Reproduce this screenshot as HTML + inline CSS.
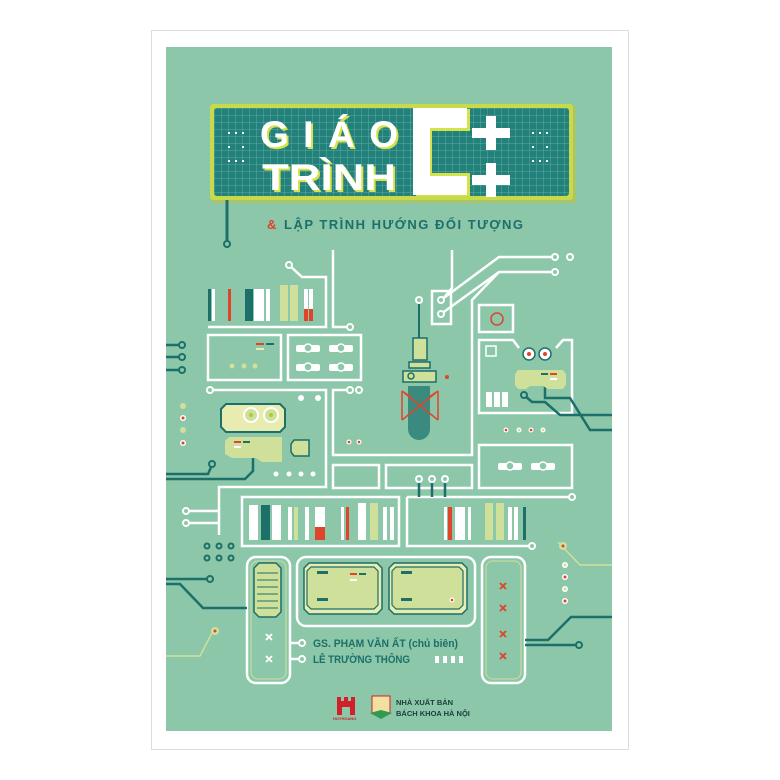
<!DOCTYPE html>
<html><head><meta charset="utf-8"><style>
html,body{margin:0;padding:0;background:#fff;width:780px;height:780px;overflow:hidden}
svg{display:block}
text{font-family:"Liberation Sans","DejaVu Sans",sans-serif;font-weight:bold}
</style></head><body>
<svg width="780" height="780" viewBox="0 0 780 780" xmlns="http://www.w3.org/2000/svg">
<defs>
<pattern id="grid" width="7" height="7" patternUnits="userSpaceOnUse" x="214" y="108">
<rect width="7" height="7" fill="#23817b"/>
<path d="M0 0H7M0 0V7" stroke="#6fb3a9" stroke-width="0.8"/>
</pattern>
</defs>
<rect x="151.5" y="30.5" width="477" height="719" fill="#fff" stroke="#ddd"/>
<rect x="166" y="47" width="446" height="684" fill="#8bc7a8"/>

<!-- title panel -->
<rect x="212" y="106" width="364" height="97" fill="#a9c46a"/>
<rect x="210" y="104" width="363" height="96" rx="3" fill="#c8d94a"/>
<rect x="214" y="108" width="355" height="88" rx="3" fill="url(#grid)"/>
<g fill="#fff">
<rect x="228" y="132" width="2" height="2"/><rect x="235" y="132" width="2" height="2"/><rect x="242" y="132" width="2" height="2"/>
<rect x="228" y="146" width="2" height="2"/><rect x="242" y="146" width="2" height="2"/>
<rect x="228" y="160" width="2" height="2"/><rect x="235" y="160" width="2" height="2"/><rect x="242" y="160" width="2" height="2"/>
<rect x="532" y="132" width="2" height="2"/><rect x="539" y="132" width="2" height="2"/><rect x="546" y="132" width="2" height="2"/>
<rect x="532" y="146" width="2" height="2"/><rect x="546" y="146" width="2" height="2"/>
<rect x="532" y="160" width="2" height="2"/><rect x="539" y="160" width="2" height="2"/><rect x="546" y="160" width="2" height="2"/>
</g>
<g font-size="37">
<text x="262" y="149" fill="#d5e24a" textLength="138" lengthAdjust="spacing">GIÁO</text>
<text x="260" y="147" fill="#fff" textLength="138" lengthAdjust="spacing">GIÁO</text>
<text x="264" y="192" fill="#d5e24a" textLength="134" lengthAdjust="spacingAndGlyphs">TRÌNH</text>
<text x="262" y="190" fill="#fff" textLength="134" lengthAdjust="spacingAndGlyphs">TRÌNH</text>
</g>
<!-- C++ -->
<path d="M416 109H470V131H432V173H470V196H416Z" fill="#d5e24a"/>
<path d="M413 108H467V128H430V176H467V195H413Z" fill="#fff"/>
<path d="M486 116h10v12h14v10h-14v12h-10v-12h-14v-10h14z" fill="#fff"/>
<path d="M486 163h10v12h14v10h-14v12h-10v-12h-14v-10h14z" fill="#fff"/>
<line x1="227" y1="200" x2="227" y2="243" stroke="#1d6f6a" stroke-width="3"/>
<circle cx="227" cy="244" r="3" fill="#8bc7a8" stroke="#1d6f6a" stroke-width="2"/>
<text x="267" y="229" font-size="13" fill="#e0442a">&amp;</text>
<text x="284" y="229" font-size="13" fill="#1d6f6a" textLength="239" lengthAdjust="spacing">LẬP TRÌNH HƯỚNG ĐỐI TƯỢNG</text>

<!-- white traces -->
<g fill="none" stroke="#fff" stroke-width="2.5">
<path d="M333 250V327H350"/>
<path d="M452 250V288L442 300"/>
<rect x="432" y="291" width="19" height="33"/>
<path d="M441 314L499 272H555"/>
<path d="M441 300L499 257H555"/>
<path d="M208 327H326V277H302L289 265"/>
<rect x="208" y="335" width="73" height="45"/>
<rect x="288" y="335" width="73" height="45"/>
<path d="M210 390H326V487H219V535"/>
<path d="M186 511H219M186 523H219"/>
<path d="M350 390H333V455H472V300L499 272"/>
<rect x="479" y="305" width="34" height="27"/>
<path d="M519 348L513 340H479V413H572V340H563L556 348"/>
<rect x="333" y="465" width="46" height="23"/>
<rect x="386" y="465" width="86" height="23"/>
<rect x="479" y="445" width="93" height="43"/>
<rect x="242" y="497" width="157" height="49"/>
<path d="M407 497H572M407 497V546H532"/>
<rect x="247" y="557" width="43" height="126" rx="9"/>
<rect x="297" y="557" width="178" height="69" rx="9"/>
<rect x="482" y="557" width="43" height="126" rx="9"/>
</g>
<g fill="#8bc7a8" stroke="#fff" stroke-width="2">
<circle cx="350" cy="327" r="3"/><circle cx="289" cy="265" r="3"/><circle cx="555" cy="272" r="3"/><circle cx="555" cy="257" r="3"/><circle cx="570" cy="257" r="3"/>
<circle cx="441" cy="300" r="3"/><circle cx="441" cy="314" r="3"/><circle cx="210" cy="390" r="3"/><circle cx="350" cy="390" r="3"/><circle cx="359" cy="390" r="3"/>
<circle cx="186" cy="511" r="3"/><circle cx="186" cy="523" r="3"/><circle cx="572" cy="497" r="3"/><circle cx="532" cy="546" r="3"/>
<circle cx="302" cy="643" r="3"/><circle cx="302" cy="659" r="3"/>
</g>
<path d="M290 643H299M290 659H299" stroke="#fff" stroke-width="2.5"/>
<g fill="#fff"><circle cx="301" cy="398" r="3"/><circle cx="318" cy="398" r="3"/></g>

<!-- books top-left -->
<rect x="208" y="289" width="3" height="32" fill="#1d6f6a"/><rect x="212" y="289" width="3" height="32" fill="#fff"/>
<rect x="228" y="289" width="3" height="32" fill="#e0442a"/>
<rect x="245" y="289" width="8" height="32" fill="#1d6f6a"/><rect x="254" y="289" width="10" height="32" fill="#fff"/><rect x="266" y="289" width="4" height="32" fill="#fff"/>
<rect x="280" y="285" width="8" height="36" fill="#cfe09a"/><rect x="290" y="285" width="8" height="36" fill="#cfe09a"/>
<rect x="304" y="289" width="4" height="32" fill="#fff"/><rect x="309" y="289" width="4" height="32" fill="#fff"/>
<rect x="304" y="309" width="4" height="12" fill="#e0442a"/><rect x="309" y="309" width="4" height="12" fill="#e0442a"/>
<!-- box1 contents -->
<rect x="256" y="343" width="8" height="2" fill="#e0442a"/><rect x="266" y="343" width="8" height="2" fill="#1d6f6a"/><rect x="256" y="348" width="8" height="2" fill="#e8ecb0"/>
<g fill="#cfe09a"><circle cx="232" cy="366" r="2.5"/><circle cx="244" cy="366" r="2.5"/><circle cx="255" cy="366" r="2.5"/></g>
<g fill="#fff"><rect x="296" y="345" width="24" height="7" rx="2"/><rect x="329" y="345" width="24" height="7" rx="2"/><rect x="296" y="364" width="24" height="7" rx="2"/><rect x="329" y="364" width="24" height="7" rx="2"/></g>
<g fill="#8bc7a8" stroke="#fff" stroke-width="1.5"><circle cx="308" cy="348" r="4"/><circle cx="341" cy="348" r="4"/><circle cx="308" cy="367" r="4"/><circle cx="341" cy="367" r="4"/></g>

<!-- teal lines -->
<g stroke="#1d6f6a" stroke-width="2.5" fill="none">
<path d="M166 345H180M166 357H180M166 370H180"/>
<path d="M166 474H208L212 465"/>
<path d="M166 479H245L253 471V458"/>
<path d="M166 579H208"/>
<path d="M166 584H180L203 608H247"/>
<path d="M525 640H548L571 617H612"/>
<path d="M525 645H577"/>
<path d="M524 395L532 402H545L560 415H612M545 385V398H570L590 430H612"/>
</g>
<g fill="#8bc7a8" stroke="#1d6f6a" stroke-width="2"><circle cx="182" cy="345" r="3"/><circle cx="182" cy="357" r="3"/><circle cx="182" cy="370" r="3"/><circle cx="212" cy="464" r="3"/><circle cx="210" cy="579" r="3"/><circle cx="579" cy="645" r="3"/><circle cx="524" cy="395" r="3"/>
<circle cx="207" cy="546" r="2.5"/><circle cx="219" cy="546" r="2.5"/><circle cx="231" cy="546" r="2.5"/><circle cx="207" cy="558" r="2.5"/><circle cx="219" cy="558" r="2.5"/><circle cx="231" cy="558" r="2.5"/></g>
<path d="M166 656H200L213 631M558 542L580 565H612" stroke="#cfe09a" stroke-width="1.5" fill="none"/>
<circle cx="215" cy="631" r="4" fill="#cfe09a"/><circle cx="215" cy="631" r="1.5" fill="#e0442a"/>
<circle cx="563" cy="546" r="4" fill="#cfe09a"/><circle cx="563" cy="546" r="1.5" fill="#e0442a"/>

<!-- left dot column -->
<circle cx="183" cy="406" r="3" fill="#cfe09a"/><circle cx="183" cy="418" r="3" fill="#fff"/><circle cx="183" cy="418" r="1.5" fill="#e0442a"/>
<circle cx="183" cy="430" r="3" fill="#cfe09a"/><circle cx="183" cy="443" r="3" fill="#fff"/><circle cx="183" cy="443" r="1.5" fill="#e0442a"/>
<!-- right dot column -->
<circle cx="565" cy="565" r="3" fill="#fff"/><circle cx="565" cy="565" r="1.5" fill="#cfe09a"/>
<circle cx="565" cy="577" r="3" fill="#fff"/><circle cx="565" cy="577" r="1.5" fill="#e0442a"/>
<circle cx="565" cy="589" r="3" fill="#fff"/><circle cx="565" cy="589" r="1.5" fill="#cfe09a"/>
<circle cx="565" cy="601" r="3" fill="#fff"/><circle cx="565" cy="601" r="1.5" fill="#e0442a"/>

<!-- video module -->
<path d="M226 404H280L285 409V427L280 432H226L221 427V409Z" fill="#e8ecb0" stroke="#1d6f6a" stroke-width="2"/>
<circle cx="251" cy="415" r="7" fill="#cfe09a" stroke="#fff" stroke-width="2"/><circle cx="251" cy="415" r="2" fill="#b4c93a"/>
<circle cx="271" cy="415" r="7" fill="#cfe09a" stroke="#fff" stroke-width="2"/><circle cx="271" cy="415" r="2" fill="#b4c93a"/>
<path d="M229 437H282V462H262L256 458H232L225 454V441Z" fill="#cfe09a"/>
<rect x="234" y="441" width="7" height="2" fill="#e0442a"/><rect x="243" y="441" width="7" height="2" fill="#1d6f6a"/><rect x="234" y="446" width="7" height="2" fill="#fff"/>
<path d="M294 440H309V456H294L291 452V444Z" fill="#cfe09a" stroke="#1d6f6a" stroke-width="1.5"/>
<g fill="#fff"><circle cx="276" cy="474" r="2.5"/><circle cx="289" cy="474" r="2.5"/><circle cx="301" cy="474" r="2.5"/><circle cx="313" cy="474" r="2.5"/></g>

<!-- mic -->
<line x1="419" y1="300" x2="419" y2="338" stroke="#1d6f6a" stroke-width="2"/>
<circle cx="419" cy="300" r="3" fill="#8bc7a8" stroke="#fff" stroke-width="2"/>
<rect x="413" y="338" width="14" height="22" fill="#cfe09a" stroke="#1d6f6a" stroke-width="1.5"/>
<rect x="409" y="362" width="21" height="6" fill="#cfe09a" stroke="#1d6f6a" stroke-width="1.5"/>
<rect x="403" y="371" width="33" height="11" fill="#cfe09a" stroke="#1d6f6a" stroke-width="1.5"/>
<circle cx="411" cy="376" r="3" fill="none" stroke="#1d6f6a" stroke-width="1.5"/>
<path d="M408 386H430V429A11 11 0 0 1 408 429Z" fill="#3a8a80"/>
<path d="M402 391L438 420M438 391L402 420M402 391V420M438 391V420M402 391L411 397M438 391L429 397" stroke="#e0442a" stroke-width="1.5" fill="none"/>
<circle cx="447" cy="377" r="2" fill="#e0442a"/>
<circle cx="349" cy="442" r="2.5" fill="#fff"/><circle cx="349" cy="442" r="1.3" fill="#e0442a"/>
<circle cx="359" cy="442" r="2.5" fill="#fff"/><circle cx="359" cy="442" r="1.3" fill="#e0442a"/>
<g stroke="#1d6f6a" stroke-width="2.5"><path d="M419 479V497M432 479V497M445 479V497"/></g>
<g fill="#8bc7a8" stroke="#fff" stroke-width="2"><circle cx="419" cy="479" r="3"/><circle cx="432" cy="479" r="3"/><circle cx="445" cy="479" r="3"/></g>

<!-- right modules -->
<circle cx="497" cy="319" r="6" fill="none" stroke="#e0442a" stroke-width="1.5"/>
<rect x="486" y="346" width="10" height="10" fill="none" stroke="#fff" stroke-width="1.5"/>
<circle cx="529" cy="354" r="6" fill="#fff" stroke="#1d6f6a" stroke-width="1.5"/><circle cx="529" cy="354" r="2" fill="#e0442a"/>
<circle cx="545" cy="354" r="6" fill="#fff" stroke="#1d6f6a" stroke-width="1.5"/><circle cx="545" cy="354" r="2" fill="#e0442a"/>
<path d="M518 370H563L566 374V385L563 389H548L543 386H530L526 389H518L515 385V374Z" fill="#cfe09a"/>
<rect x="541" y="373" width="7" height="2" fill="#1d6f6a"/><rect x="550" y="373" width="7" height="2" fill="#e0442a"/><rect x="550" y="378" width="7" height="2" fill="#fff"/>
<g fill="#fff"><rect x="486" y="392" width="6" height="15"/><rect x="494" y="392" width="6" height="15"/><rect x="502" y="392" width="6" height="15"/></g>
<circle cx="506" cy="430" r="2.5" fill="#fff"/><circle cx="506" cy="430" r="1.3" fill="#e0442a"/>
<circle cx="519" cy="430" r="2.5" fill="#fff"/><circle cx="519" cy="430" r="1.3" fill="#cfe09a"/>
<circle cx="531" cy="430" r="2.5" fill="#fff"/><circle cx="531" cy="430" r="1.3" fill="#e0442a"/>
<circle cx="543" cy="430" r="2.5" fill="#fff"/><circle cx="543" cy="430" r="1.3" fill="#cfe09a"/>
<g fill="#fff"><rect x="498" y="463" width="24" height="7" rx="2"/><rect x="531" y="463" width="24" height="7" rx="2"/></g>
<g fill="#8bc7a8" stroke="#fff" stroke-width="1.5"><circle cx="510" cy="466" r="4"/><circle cx="543" cy="466" r="4"/></g>

<!-- bottom books left -->
<rect x="249" y="505" width="9" height="35" fill="#fff"/><rect x="261" y="505" width="9" height="35" fill="#1d6f6a"/><rect x="272" y="505" width="9" height="35" fill="#fff"/>
<rect x="288" y="507" width="4" height="33" fill="#fff"/><rect x="294" y="507" width="4" height="33" fill="#cfe09a"/>
<rect x="305" y="507" width="4" height="33" fill="#fff"/>
<rect x="315" y="507" width="10" height="33" fill="#fff"/><rect x="315" y="527" width="10" height="13" fill="#e0442a"/>
<rect x="341" y="507" width="3" height="33" fill="#fff"/><rect x="346" y="507" width="3" height="33" fill="#e0442a"/>
<rect x="358" y="503" width="8" height="37" fill="#fff"/><rect x="370" y="503" width="8" height="37" fill="#cfe09a"/>
<rect x="383" y="507" width="4" height="33" fill="#fff"/><rect x="390" y="507" width="4" height="33" fill="#fff"/>
<!-- bottom books right -->
<rect x="444" y="507" width="3" height="33" fill="#fff"/><rect x="448" y="507" width="4" height="33" fill="#e0442a"/>
<rect x="455" y="507" width="10" height="33" fill="#fff"/><rect x="468" y="507" width="3" height="33" fill="#fff"/>
<rect x="485" y="503" width="8" height="37" fill="#cfe09a"/><rect x="496" y="503" width="8" height="37" fill="#cfe09a"/>
<rect x="508" y="507" width="4" height="33" fill="#fff"/><rect x="514" y="507" width="4" height="33" fill="#fff"/><rect x="523" y="507" width="3" height="33" fill="#1d6f6a"/>

<!-- bottom panels -->
<rect x="251" y="561" width="35" height="118" rx="7" fill="none" stroke="#cfe09a" stroke-width="1"/>
<path d="M259 563H276L281 568V612L276 617H259L254 612V568Z" fill="#cfe09a" stroke="#1d6f6a" stroke-width="1.5"/>
<g stroke="#1d6f6a" stroke-width="1"><path d="M257 573H278M257 580H278M257 587H278M257 594H278M257 601H278M257 608H278"/></g>
<g stroke="#fff" stroke-width="1.8"><path d="M266 634l6 6M272 634l-6 6M266 656l6 6M272 656l-6 6"/></g>
<rect x="486" y="561" width="35" height="118" rx="7" fill="none" stroke="#cfe09a" stroke-width="1"/>
<g stroke="#e0442a" stroke-width="1.8"><path d="M500 583l6 6M506 583l-6 6M500 605l6 6M506 605l-6 6M500 631l6 6M506 631l-6 6M500 653l6 6M506 653l-6 6"/></g>
<path d="M309 563H377L382 568V609L377 614H309L304 609V568Z" fill="#e8ecb0" stroke="#1d6f6a" stroke-width="1.5"/>
<path d="M311 567H374L378 571V605L374 609H311L307 605V571Z" fill="#cfe09a" stroke="#1d6f6a" stroke-width="1.2"/>
<path d="M394 563H462L467 568V609L462 614H394L389 609V568Z" fill="#e8ecb0" stroke="#1d6f6a" stroke-width="1.5"/>
<path d="M396 567H459L463 571V605L459 609H396L392 605V571Z" fill="#cfe09a" stroke="#1d6f6a" stroke-width="1.2"/>
<g fill="#1d6f6a"><rect x="317" y="571" width="11" height="3"/><rect x="317" y="598" width="11" height="3"/><rect x="401" y="571" width="11" height="3"/><rect x="401" y="598" width="11" height="3"/></g>
<rect x="350" y="573" width="7" height="2" fill="#e0442a"/><rect x="359" y="573" width="7" height="2" fill="#1d6f6a"/><rect x="350" y="579" width="7" height="2" fill="#fff"/>
<circle cx="452" cy="600" r="2.5" fill="#fff"/><circle cx="452" cy="600" r="1.3" fill="#e0442a"/>

<!-- authors -->
<text x="313" y="647" font-size="11" fill="#1d6f6a" textLength="145" lengthAdjust="spacingAndGlyphs">GS. PHẠM VĂN ẤT (chủ biên)</text>
<text x="313" y="663" font-size="11" fill="#1d6f6a" textLength="97" lengthAdjust="spacingAndGlyphs">LÊ TRƯỜNG THÔNG</text>
<g fill="#fff"><rect x="435" y="656" width="4" height="7"/><rect x="443" y="656" width="4" height="7"/><rect x="451" y="656" width="4" height="7"/><rect x="459" y="656" width="4" height="7"/></g>

<!-- logos -->
<path d="M337 697h4v4h3v-4h4v4h3v-4h4v18h-5v-8h-8v8h-5z" fill="#d0202a"/>
<text x="333" y="720" font-size="4" fill="#d0202a">HUYHOANG</text>
<path d="M372 696h18v17l-9 4-9-4z" fill="#f2e0a0" stroke="#d0202a" stroke-width="1"/>
<path d="M370 713l11 6 11-6-11-3z" fill="#2f9a50"/>
<text x="396" y="705" font-size="7.5" fill="#1b3d3a">NHÀ XUẤT BẢN</text>
<text x="396" y="716" font-size="7.5" fill="#1b3d3a">BÁCH KHOA HÀ NỘI</text>
</svg>
</body></html>
